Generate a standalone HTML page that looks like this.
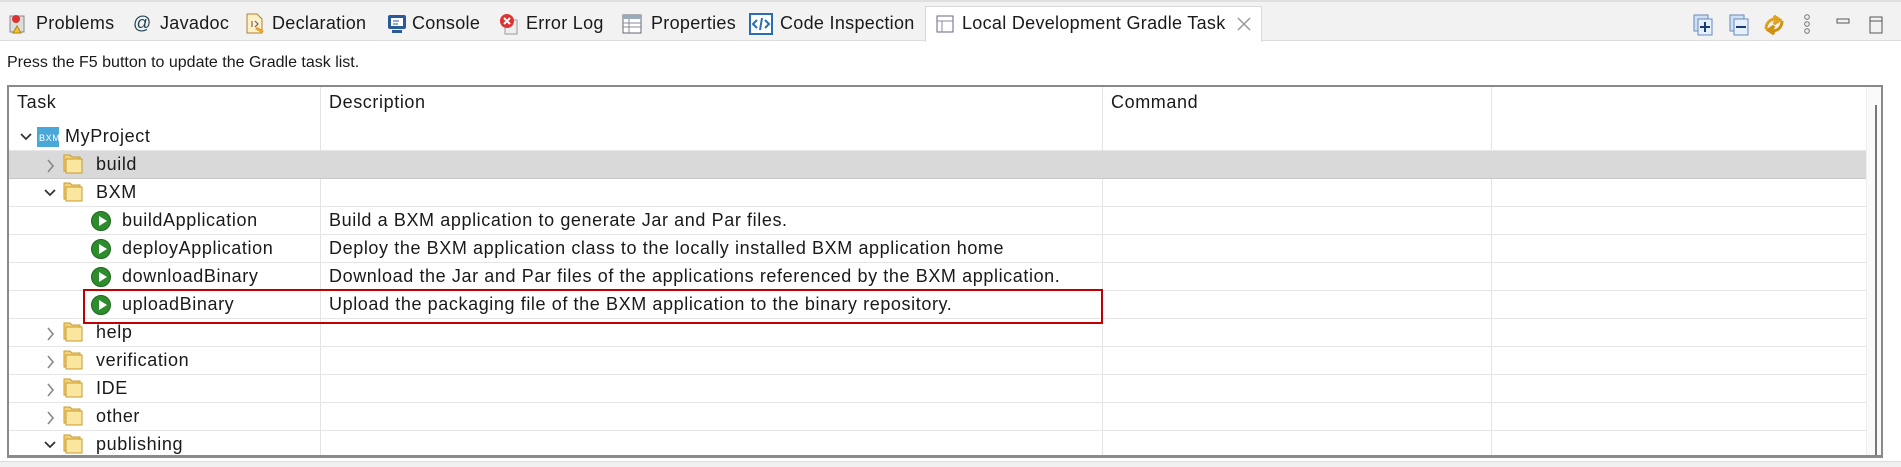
<!DOCTYPE html>
<html><head><meta charset="utf-8"><style>
*{margin:0;padding:0;box-sizing:border-box}
body{width:1901px;height:467px;background:#fff;font-family:"Liberation Sans","Noto Sans CJK KR",sans-serif;font-size:17px;color:#1a1a1a;position:relative;overflow:hidden}
.abs{position:absolute;white-space:nowrap}
.tabbar{position:absolute;left:0;top:0;width:1901px;height:41px;background:#f2f2f2;border-top:2px solid #e0e0e0;border-bottom:1px solid #dcdcdc}
.tab{position:absolute;top:13px;font-size:18px;letter-spacing:0.3px;white-space:nowrap}
.active{position:absolute;left:925px;top:6px;width:337px;height:36px;background:#fff;border:1px solid #d8d8d8;border-bottom:none}
.table{position:absolute;left:7px;top:85px;width:1876px;height:373px;border:2px solid #8a8a8a;border-bottom-width:3px;overflow:hidden;font-size:18px;letter-spacing:0.6px}
.row{position:absolute;left:0;width:1857px;height:28px;border-bottom:1px solid #e6e6e6}
.col{position:absolute;top:0;width:1px;height:373px;background:#e4e4e4}
.t{position:absolute;top:3px;white-space:nowrap}
.ch{position:absolute;top:8px}
.play{position:absolute;top:4px;width:20px;height:20px;border-radius:50%;background:#2e8b2e;border:1px solid #1d6a1d}
.play:after{content:"";position:absolute;left:7px;top:4px;border-left:8px solid #fff;border-top:5px solid transparent;border-bottom:5px solid transparent}
</style></head><body>
<div class="tabbar"></div>
<div class="active"></div>
<svg class="abs" style="left:8px;top:13px" width="22" height="22"><rect x="2" y="3" width="14" height="16" fill="#ddd" stroke="#888"/><circle cx="8" cy="6" r="4" fill="#d33"/><path d="M5 20l4-7 4 7z" fill="#f0c040" stroke="#a80"/></svg>
<div class="tab" style="left:36px">Problems</div>
<div class="tab" style="left:133px;color:#245">@</div>
<div class="tab" style="left:160px">Javadoc</div>
<svg class="abs" style="left:244px;top:12px" width="22" height="24"><path d="M3 2h10l5 5v14H3z" fill="#fbf0c8" stroke="#b08030"/><path d="M8 9v6M11 9l3 3-3 3" stroke="#555" fill="none"/><path d="M12 16l7 4" stroke="#e8a030" stroke-width="3"/></svg>
<div class="tab" style="left:272px">Declaration</div>
<svg class="abs" style="left:386px;top:13px" width="22" height="22"><rect x="2" y="2" width="18" height="14" rx="2" fill="#2a5a9a"/><rect x="5" y="5" width="12" height="8" fill="#fff"/><path d="M7 8h6M7 11h5" stroke="#2a5a9a"/><rect x="6" y="17" width="10" height="3" fill="#2a5a9a"/></svg>
<div class="tab" style="left:412px">Console</div>
<svg class="abs" style="left:498px;top:12px" width="22" height="24"><rect x="7" y="8" width="12" height="14" fill="#eee" stroke="#999"/><circle cx="9" cy="9" r="7" fill="#d33"/><path d="M6 6l6 6M12 6l-6 6" stroke="#fff" stroke-width="2"/></svg>
<div class="tab" style="left:526px">Error Log</div>
<svg class="abs" style="left:621px;top:13px" width="22" height="22"><rect x="2" y="2" width="18" height="18" fill="#fff" stroke="#667"/><rect x="2" y="2" width="18" height="4" fill="#9ab"/><path d="M2 10h18M2 14h18M8 6v14" stroke="#889"/></svg>
<div class="tab" style="left:651px">Properties</div>
<svg class="abs" style="left:749px;top:12px" width="24" height="24"><rect x="1" y="2" width="22" height="20" fill="#fff" stroke="#2a6db0" stroke-width="2"/><path d="M8 8l-4 4 4 4M16 8l4 4-4 4M13 6l-2 12" stroke="#2a6db0" stroke-width="2" fill="none"/></svg>
<div class="tab" style="left:780px">Code Inspection</div>
<svg class="abs" style="left:935px;top:14px" width="20" height="20"><rect x="2" y="2" width="16" height="16" fill="#fff" stroke="#668"/><path d="M2 7h16M7 7v11" stroke="#889"/></svg>
<div class="tab" style="left:962px">Local Development Gradle Task</div>
<svg class="abs" style="left:1236px;top:16px" width="16" height="16"><path d="M2 2l12 12M14 2L2 14" stroke="#999" stroke-width="1.5"/></svg>
<svg class="abs" style="left:1692px;top:13px" width="200" height="24">
<rect x="2" y="2" width="14" height="16" fill="#cfe0f5" stroke="#6a8ab8"/><rect x="6" y="6" width="14" height="16" fill="#e6f0fc" stroke="#6a8ab8"/><path d="M13 9v10M8 14h10" stroke="#1a3a70" stroke-width="2"/>
<rect x="38" y="2" width="14" height="16" fill="#cfe0f5" stroke="#6a8ab8"/><rect x="42" y="6" width="14" height="16" fill="#e6f0fc" stroke="#6a8ab8"/><path d="M44 14h10" stroke="#1a3a70" stroke-width="2"/>
<path d="M74 16c0-6 4-10 10-10l-2-3 6 4-6 4 2-3" fill="none" stroke="#e0a020" stroke-width="3"/><path d="M90 8c0 6-4 10-10 10l2 3-6-4 6-4-2 3" fill="none" stroke="#d09010" stroke-width="3"/>
<circle cx="115" cy="4" r="2.3" fill="none" stroke="#777"/><circle cx="115" cy="11" r="2.3" fill="none" stroke="#777"/><circle cx="115" cy="18" r="2.3" fill="none" stroke="#777"/>
<rect x="145" y="6" width="12" height="4" fill="none" stroke="#555"/>
<rect x="178" y="4" width="12" height="16" fill="none" stroke="#555"/><path d="M178 8h12" stroke="#555"/>
</svg>
<div class="abs" style="left:7px;top:54px;font-size:16px">Press the F5 button to update the Gradle task list.</div>
<div class="table">
<div class="col" style="left:311px"></div><div class="col" style="left:1093px"></div><div class="col" style="left:1482px"></div>
<div class="abs" style="left:8px;top:5px">Task</div>
<div class="abs" style="left:320px;top:5px">Description</div>
<div class="abs" style="left:1102px;top:5px">Command</div>
<div style="position:absolute;left:1857px;top:0;width:17px;height:373px;background:#fafafa;border-left:1px solid #eee"></div>
<div style="position:absolute;left:1866px;top:18px;width:2px;height:350px;background:#777"></div>

<div class="row" style="top:36px"><svg class="ch" style="left:11px" width="12" height="12"><path d="M1 3l5 5 5-5" fill="none" stroke="#333" stroke-width="1.8"/></svg><svg class="abs" style="left:28px;top:4px" width="22" height="20"><rect width="22" height="20" fill="#4aa8d8"/><text x="2" y="14" font-size="9" fill="#fff" font-family="Liberation Sans">BXM</text></svg><span class="t" style="left:56px">MyProject</span></div>
<div class="row" style="top:64px;background:#d9d9d9;border-bottom-color:#c8c8c8"><svg class="ch" style="left:36px" width="12" height="14"><path d="M3 1l5 6-5 6" fill="none" stroke="#888" stroke-width="1.6"/></svg><span class="t" style="left:87px">build</span></div>
<div class="row" style="top:92px"><svg class="ch" style="left:35px" width="12" height="12"><path d="M1 3l5 5 5-5" fill="none" stroke="#333" stroke-width="1.8"/></svg><span class="t" style="left:87px">BXM</span></div>
<div class="row" style="top:120px"><span class="play" style="left:82px"></span><span class="t" style="left:113px">buildApplication</span><span class="t" style="left:320px">Build a BXM application to generate Jar and Par files.</span></div>
<div class="row" style="top:148px"><span class="play" style="left:82px"></span><span class="t" style="left:113px">deployApplication</span><span class="t" style="left:320px">Deploy the BXM application class to the locally installed BXM application home</span></div>
<div class="row" style="top:176px"><span class="play" style="left:82px"></span><span class="t" style="left:113px">downloadBinary</span><span class="t" style="left:320px">Download the Jar and Par files of the applications referenced by the BXM application.</span></div>
<div class="row" style="top:204px"><span class="play" style="left:82px"></span><span class="t" style="left:113px">uploadBinary</span><span class="t" style="left:320px">Upload the packaging file of the BXM application to the binary repository.</span></div>
<div class="row" style="top:232px"><svg class="ch" style="left:36px" width="12" height="14"><path d="M3 1l5 6-5 6" fill="none" stroke="#888" stroke-width="1.6"/></svg><span class="t" style="left:87px">help</span></div>
<div class="row" style="top:260px"><svg class="ch" style="left:36px" width="12" height="14"><path d="M3 1l5 6-5 6" fill="none" stroke="#888" stroke-width="1.6"/></svg><span class="t" style="left:87px">verification</span></div>
<div class="row" style="top:288px"><svg class="ch" style="left:36px" width="12" height="14"><path d="M3 1l5 6-5 6" fill="none" stroke="#888" stroke-width="1.6"/></svg><span class="t" style="left:87px">IDE</span></div>
<div class="row" style="top:316px"><svg class="ch" style="left:36px" width="12" height="14"><path d="M3 1l5 6-5 6" fill="none" stroke="#888" stroke-width="1.6"/></svg><span class="t" style="left:87px">other</span></div>
<div class="row" style="top:344px"><svg class="ch" style="left:35px" width="12" height="12"><path d="M1 3l5 5 5-5" fill="none" stroke="#333" stroke-width="1.8"/></svg><span class="t" style="left:87px">publishing</span></div>
<div style="position:absolute;left:74px;top:202px;width:1020px;height:35px;border:2px solid #c00000"></div>
</div>
<svg class="abs" style="left:0;top:0" width="100" height="467">
<g fill="#f5d27a" stroke="#c79a2e">
<path d="M64 155h6l2 2h8v14H64z"/><path d="M66 159h16v14H66z" fill="#fbe6a0"/>
<path d="M64 183h6l2 2h8v14H64z"/><path d="M66 187h16v14H66z" fill="#fbe6a0"/>
<path d="M64 323h6l2 2h8v14H64z"/><path d="M66 327h16v14H66z" fill="#fbe6a0"/>
<path d="M64 351h6l2 2h8v14H64z"/><path d="M66 355h16v14H66z" fill="#fbe6a0"/>
<path d="M64 379h6l2 2h8v14H64z"/><path d="M66 383h16v14H66z" fill="#fbe6a0"/>
<path d="M64 407h6l2 2h8v14H64z"/><path d="M66 411h16v14H66z" fill="#fbe6a0"/>
<path d="M64 435h6l2 2h8v14H64z"/><path d="M66 439h16v14H66z" fill="#fbe6a0"/>
</g></svg>
<div style="position:absolute;left:0;top:461px;width:1901px;height:6px;background:#f0f0f0;border-top:1px solid #ddd"></div>
</body></html>
